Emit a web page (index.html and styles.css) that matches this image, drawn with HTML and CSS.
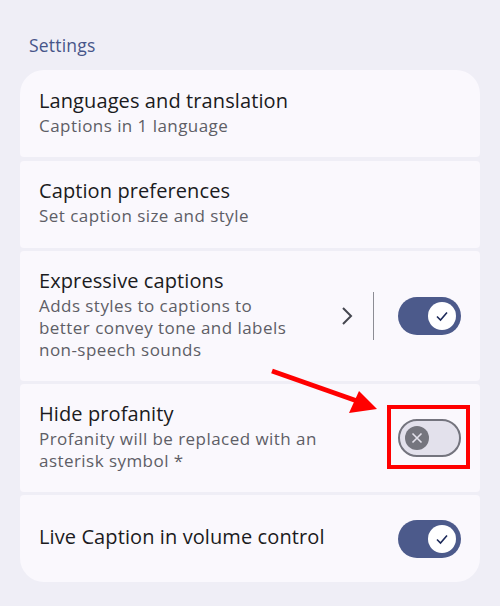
FILE: index.html
```html
<!DOCTYPE html>
<html lang="en">
<head>
    <meta charset="UTF-8">
    <meta name="viewport" content="width=device-width, initial-scale=1.0">
    <title>Live Caption settings</title>
    <link rel="stylesheet" href="styles.css">
</head>
<body>

    <div class="page">
        <p class="section-title">Settings</p>

        <div class="list">
            <div class="item">
                <div class="text">
                    <div class="title">Languages and translation</div>
                    <div class="summary">Captions in 1 language</div>
                </div>
            </div>

            <div class="item">
                <div class="text">
                    <div class="title">Caption preferences</div>
                    <div class="summary">Set caption size and style</div>
                </div>
            </div>

            <div class="item">
                <div class="text">
                    <div class="title">Expressive captions</div>
                    <div class="summary">Adds styles to captions to better convey tone and labels non-speech sounds</div>
                </div>
                <svg class="chevron" width="12" height="20" viewBox="0 0 12 20">
                    <path d="M2 2 L10 10 L2 18" fill="none" stroke="#44464f" stroke-width="2"/>
                </svg>
                <div class="divider"></div>
                <div class="switch on">
                    <span class="knob">
                        <svg width="14" height="14" viewBox="0 0 14 14">
                            <path d="M2 7.5 L5.5 11 L12 3.5" fill="none" stroke="#1d2a5a" stroke-width="1.6"/>
                        </svg>
                    </span>
                </div>
            </div>

            <div class="item">
                <div class="text">
                    <div class="title">Hide profanity</div>
                    <div class="summary">Profanity will be replaced with an asterisk symbol *</div>
                </div>
                <div class="switch-wrap">
                    <div class="switch off">
                        <span class="knob">
                            <svg width="12" height="12" viewBox="0 0 12 12">
                                <path d="M1.5 1.5 L10.5 10.5 M10.5 1.5 L1.5 10.5" fill="none" stroke="#e4e2ec" stroke-width="1.6"/>
                            </svg>
                        </span>
                    </div>
                    <div class="highlight"></div>
                </div>
            </div>

            <div class="item">
                <div class="text">
                    <div class="title">Live Caption in volume control</div>
                </div>
                <div class="switch on">
                    <span class="knob">
                        <svg width="14" height="14" viewBox="0 0 14 14">
                            <path d="M2 7.5 L5.5 11 L12 3.5" fill="none" stroke="#1d2a5a" stroke-width="1.6"/>
                        </svg>
                    </span>
                </div>
            </div>
        </div>

        <svg class="arrow" width="500" height="606" viewBox="0 0 500 606">
            <line x1="272" y1="371" x2="360" y2="402" stroke="#ff0000" stroke-width="5"/>
            <polygon points="359,391 377,409 349,413" fill="#ff0000"/>
        </svg>
    </div>

</body>
</html>
```

FILE: styles.css
```css
body {
    margin: 0;
    background-color: #efeef6;
    font-family: "Open Sans", Roboto, sans-serif;
}
.page {
    position: relative;
    width: 500px;
    height: 606px;
}
.section-title {
    margin: 0;
    padding: 33px 0 0 29px;
    height: 37px;
    box-sizing: content-box;
    font-size: 17.5px;
    line-height: 24px;
    letter-spacing: 0.2px;
    color: #475589;
}
.list {
    display: flex;
    flex-direction: column;
    gap: 3.5px;
    margin: 0 20px;
}
.item {
    display: flex;
    align-items: center;
    box-sizing: border-box;
    min-height: 87px;
    padding: 16px 19px 19.5px 19px;
    background-color: #faf8fd;
    border-radius: 4px;
}
.item:first-child {
    border-radius: 24px 24px 4px 4px;
}
.item:last-child {
    border-radius: 4px 4px 24px 24px;
}
.text {
    flex: 1;
    padding-right: 24px;
}
.title {
    font-size: 20px;
    line-height: 28px;
    letter-spacing: 0.1px;
    color: #1b1b21;
}
.summary {
    font-size: 17px;
    line-height: 22px;
    letter-spacing: 0.45px;
    color: #5e5e66;
}
.chevron,
.divider,
.switch,
.switch-wrap {
    margin-top: 4px;
}
.chevron {
    margin-left: 18px;
    margin-right: 20px;
}
.divider {
    width: 1.5px;
    height: 48px;
    background-color: #8c8c94;
    margin-right: 24px;
}
.switch {
    display: flex;
    align-items: center;
    box-sizing: border-box;
    width: 63px;
    height: 38px;
    border-radius: 19px;
}
.switch-wrap .switch {
    margin-top: 0;
}
.switch.on {
    justify-content: flex-end;
    padding-right: 5px;
    background-color: #4c5a8b;
}
.switch.off {
    padding-left: 5px;
    background-color: #e3e1ec;
    border: 2px solid #74747e;
}
.knob {
    display: flex;
    align-items: center;
    justify-content: center;
    border-radius: 50%;
}
.on .knob {
    width: 28px;
    height: 28px;
    background-color: #ffffff;
}
.off .knob {
    width: 24px;
    height: 24px;
    background-color: #75757e;
}
.switch-wrap {
    position: relative;
}
.highlight {
    position: absolute;
    top: -14px;
    right: -9px;
    bottom: -12px;
    left: -11px;
    border: 4px solid #ff0000;
}
.arrow {
    position: absolute;
    top: 0;
    left: 0;
    pointer-events: none;
}
```
